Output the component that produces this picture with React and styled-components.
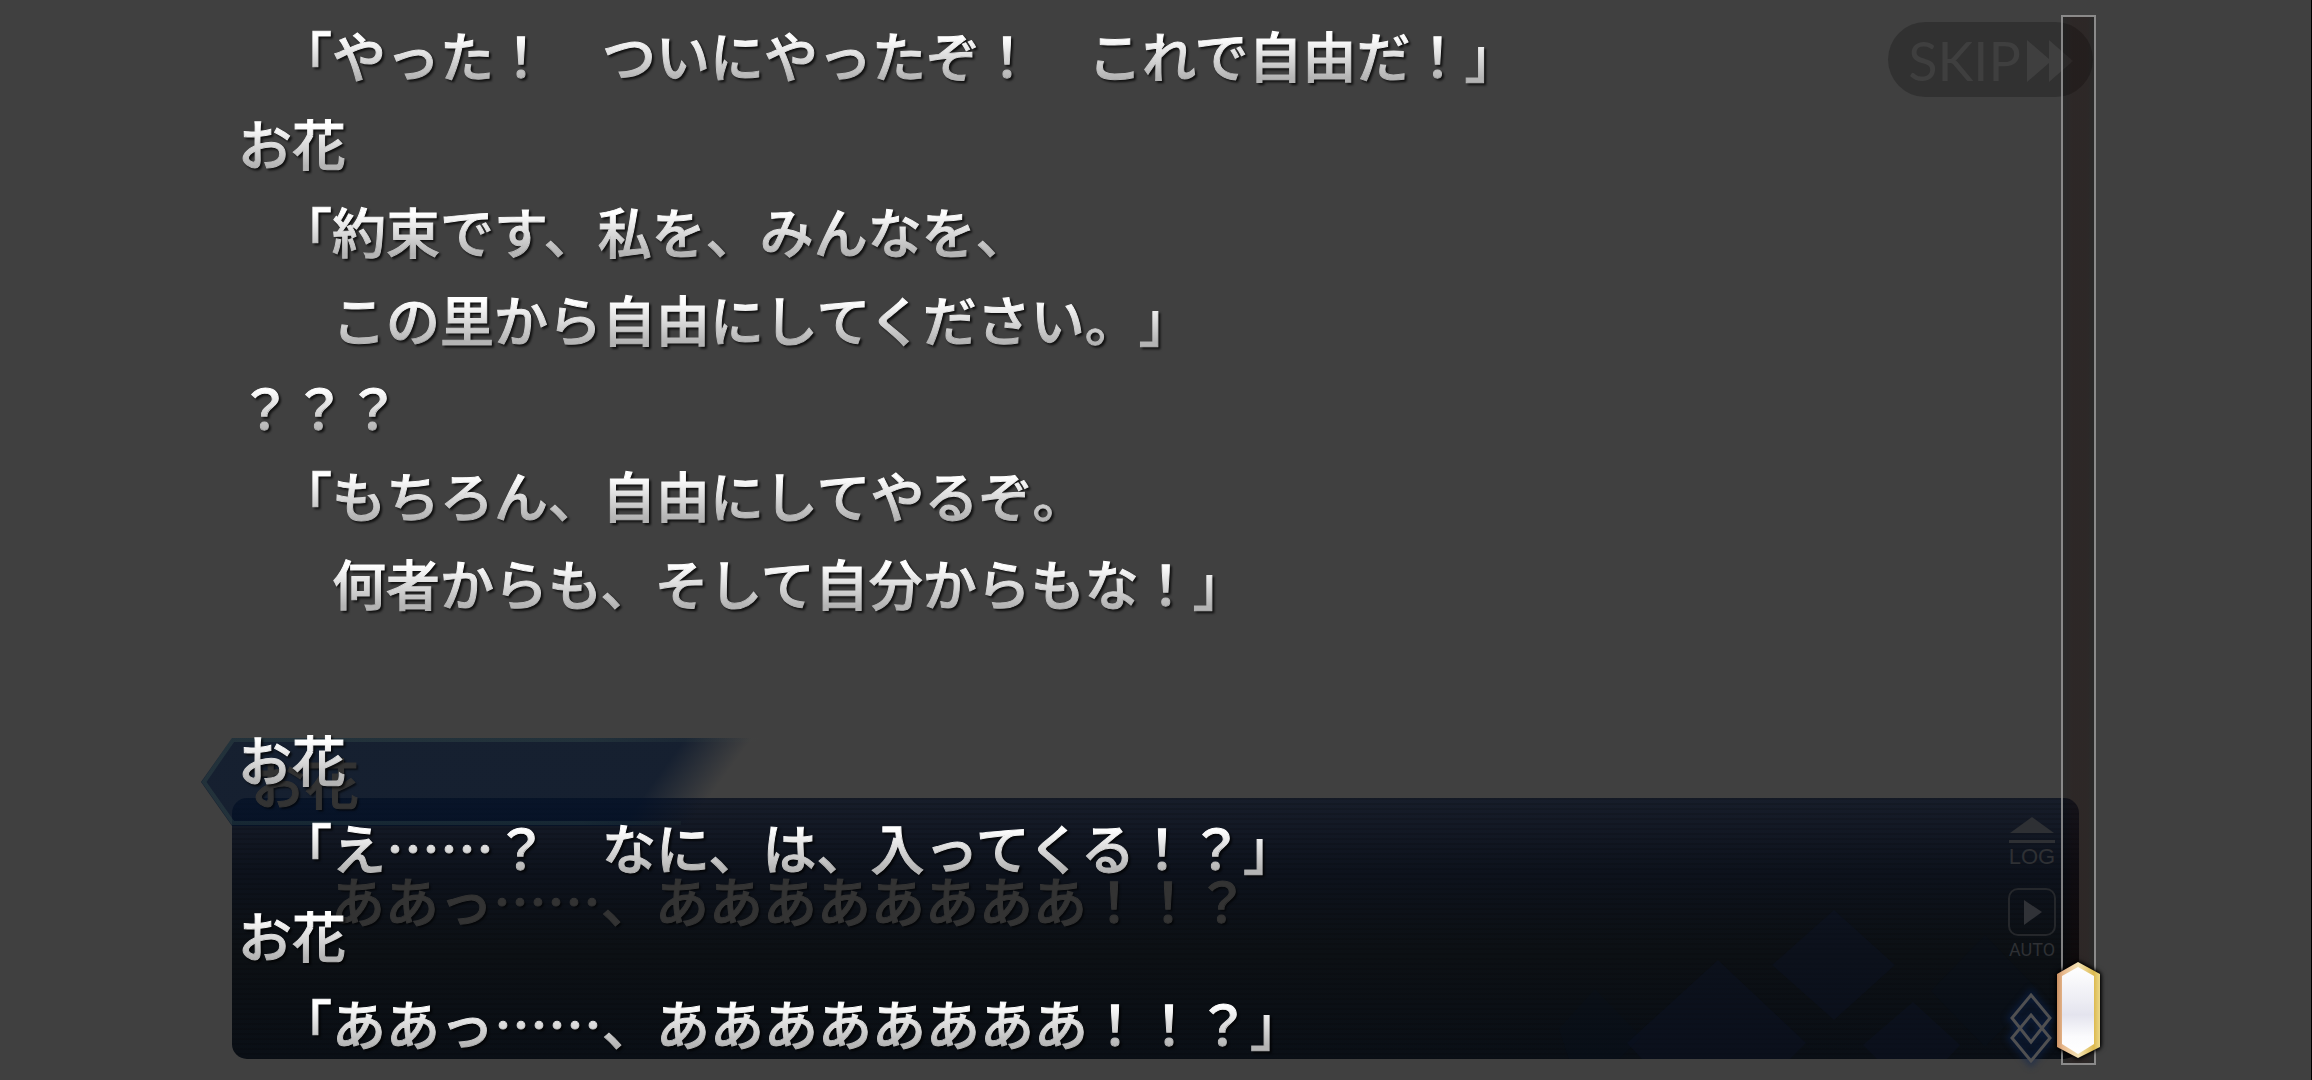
import { useState } from "react";
import styled, { createGlobalStyle } from "styled-components";

const GlobalStyle = createGlobalStyle`
    * {
        box-sizing: border-box;
    }

    body {
        margin: 0;
        background: #404040;
        font-family: "Noto Sans CJK JP", sans-serif;
        text-spacing-trim: space-all;
    }
`;

const Screen = styled.main`
    position: relative;
    display: flex;
    min-height: 100vh;
    padding: 11px 215px 13px 238px;
    border-right: 1px solid #000;
    overflow: hidden;
`;

/* the dimmed game scene that stays visible under the log */
const Scene = styled.div`
    position: absolute;
    inset: 0;
    z-index: 0;
    display: flex;
    flex-direction: column;
    justify-content: space-between;
    padding: 22px 218px 21px 201px;
`;

const SkipButton = styled.button`
    display: flex;
    align-items: center;
    justify-content: center;
    align-self: flex-end;
    gap: 6px;
    width: 205px;
    height: 75px;
    padding: 2px 0 0;
    border: 0;
    border-radius: 38px;
    background: #313131;
    color: #3f3f3f;
    font: 400 54px/72px Lato, sans-serif;
`;

const Dialog = styled.section`
    display: flex;
    flex-direction: column;
`;

const NameTag = styled.div`
    position: relative;
    z-index: 1;
    height: 88px;
    margin-bottom: -28px;
    padding-left: 50px;

    svg {
        position: absolute;
        top: 0;
        left: 0;
    }
`;

const DialogPanel = styled.div`
    position: relative;
    display: flex;
    justify-content: space-between;
    min-height: 261px;
    margin: 0 14px 0 31px;
    padding: 18px 23px 0 99px;
    border-radius: 15px;
    background:
        repeating-linear-gradient(rgba(0, 0, 0, 0.12) 0 2px, transparent 2px 5px),
        linear-gradient(#171d2a 0, #0d121c 28%, #0c1014 60%, #0a0f16 100%);
`;

const Decor = styled.svg`
    position: absolute;
    right: 0;
    bottom: 0;
`;

const GhostText = styled.p`
    position: relative;
    margin: 0;
    color: #333;
    font-size: 54px;
    font-weight: 500;
    line-height: 88px;
    white-space: pre;
    -webkit-text-stroke: 1px #333;
    text-shadow: 2px 2px 2px rgba(0, 0, 0, 0.6);
`;

const GhostLine = styled(GhostText)`
    padding-top: 40px;
`;

const Menu = styled.nav`
    position: relative;
    display: flex;
    flex-direction: column;
    align-items: center;
    width: 48px;
    margin-bottom: -8px;
`;

const MenuButton = styled.button`
    display: flex;
    flex-direction: column;
    align-items: center;
    gap: 4px;
    margin-bottom: ${({ $after }) => $after}px;
    padding: 0;
    border: 0;
    background: none;
    color: #2e3034;
    font: ${({ $narrow }) =>
        $narrow
            ? `400 18px/20px Roboto, sans-serif`
            : `400 22px/20px "Liberation Sans", sans-serif`};
`;

const Log = styled.div`
    position: relative;
    flex: 1;
    filter: drop-shadow(2px 2px 1px rgba(0, 0, 0, 0.75));
`;

const Line = styled.p`
    min-height: 88px;
    margin: 0;
    padding-left: ${({ $quote }) => ($quote ? "40px" : "0")};
    background: linear-gradient(#fff 30%, #f2f2f2 38%, #b4b4b4 76%);
    background-clip: text;
    color: transparent;
    font-size: 54px;
    font-weight: 500;
    line-height: 88px;
    white-space: pre;
    -webkit-text-stroke: 1px transparent;
`;

const Track = styled.div`
    position: relative;
    width: 35px;
    margin: 4px 0 2px;
    border: 2px solid rgba(176, 176, 176, 0.72);
    background: linear-gradient(
        90deg,
        rgba(0, 0, 0, 0.34),
        rgba(18, 4, 2, 0.4) 30%,
        rgba(18, 4, 2, 0.4) 75%,
        rgba(0, 0, 0, 0.34)
    );
`;

const Range = styled.input`
    position: absolute;
    inset: 0;
    width: 100%;
    height: 100%;
    margin: 0;
    opacity: 0;
    writing-mode: vertical-lr;
`;

const Thumb = styled.svg`
    position: absolute;
    left: -12px;
    filter: drop-shadow(0 0 2px #000) drop-shadow(0 0 2px #000);
    pointer-events: none;
`;

const lines = [
    { text: "「やった！　ついにやったぞ！　これで自由だ！」", quote: true },
    { text: "お花" },
    { text: "「約束です、私を、みんなを、", quote: true },
    { text: "　この里から自由にしてください。」", quote: true },
    { text: "？？？" },
    { text: "「もちろん、自由にしてやるぞ。", quote: true },
    { text: "　何者からも、そして自分からもな！」", quote: true },
    { text: "" },
    { text: "お花" },
    { text: "「え……？　なに、は、入ってくる！？」", quote: true },
    { text: "お花" },
    { text: "「ああっ……、ああああああああ！！？」", quote: true },
];

const SkipIcon = () => (
    <svg width="46" height="42" viewBox="0 0 46 42" fill="currentColor">
        <path d="M0 0 22 19V0L46 21 22 42V23L0 42Z" />
    </svg>
);

const TagShape = () => (
    <svg width="570" height="88" viewBox="0 0 570 88">
        <defs>
            <linearGradient
                id="tagFill"
                gradientUnits="userSpaceOnUse"
                x1="480"
                y1="6"
                x2="524"
                y2="38"
            >
                <stop offset="0" stopColor="#011028" stopOpacity="0.67" />
                <stop offset="1" stopColor="#011028" stopOpacity="0" />
            </linearGradient>
            <linearGradient
                id="tagEdge"
                gradientUnits="userSpaceOnUse"
                x1="380"
                y1="0"
                x2="560"
                y2="0"
            >
                <stop offset="0" stopColor="#4a6a5c" stopOpacity="0.24" />
                <stop offset="1" stopColor="#4a6a5c" stopOpacity="0" />
            </linearGradient>
        </defs>
        <path d="M0 44 31 0H570V88H31Z" fill="url(#tagFill)" />
        <path
            d="M560 2H32L3 44 32 85H480"
            fill="none"
            stroke="url(#tagEdge)"
            strokeWidth="4"
        />
    </svg>
);

const LogIcon = () => (
    <svg width="46" height="27" viewBox="0 0 46 27" fill="currentColor">
        <path d="M23 1 45 17H1Z" />
        <path d="M0 24h46v3H0z" />
    </svg>
);

const AutoIcon = () => (
    <svg width="48" height="48" viewBox="0 0 48 48">
        <rect
            x="1"
            y="1"
            width="46"
            height="46"
            rx="9"
            fill="none"
            stroke="#25272b"
            strokeWidth="2"
        />
        <path d="M16 12 34 24 16 37Z" fill="#303237" />
    </svg>
);

const NextIcon = () => (
    <svg width="48" height="76" viewBox="0 0 48 76" overflow="visible">
        <g
            fill="none"
            stroke="#0b2452"
            strokeOpacity="0.5"
            strokeWidth="9"
            style={{ filter: "blur(3px)" }}
        >
            <path d="M23 5 42 28 23 52 4 28Z" />
            <path d="M23 25 42 48 23 71 4 48Z" />
        </g>
        <g fill="none" stroke="#505051" strokeWidth="3">
            <path d="M23 5 42 28 23 52 4 28Z" />
            <path d="M23 25 42 48 23 71 4 48Z" />
        </g>
    </svg>
);

const ThumbShape = ({ style }) => (
    <Thumb style={style} width="55" height="108" viewBox="0 0 55 108">
        <defs>
            <linearGradient id="gold" x1="0" x2="1">
                <stop offset="0" stopColor="#c98f62" />
                <stop offset="0.14" stopColor="#e8b98e" />
                <stop offset="0.5" stopColor="#f4e3b4" />
                <stop offset="0.86" stopColor="#dcb94f" />
                <stop offset="1" stopColor="#ecd98a" />
            </linearGradient>
            <linearGradient id="pearl" x1="0" y1="0" x2="0" y2="1">
                <stop offset="0" stopColor="#ffffff" />
                <stop offset="0.4" stopColor="#ececf3" />
                <stop offset="0.55" stopColor="#e4e4ee" />
                <stop offset="0.8" stopColor="#fbfbfd" />
                <stop offset="1" stopColor="#ffffff" />
            </linearGradient>
        </defs>
        <path d="M27 6 49 18V91L27 102 6 91V18Z" fill="url(#gold)" />
        <path d="M27 11 43 20V88L27 98 11 88V20Z" fill="url(#pearl)" />
    </Thumb>
);

const ScrollBar = () => {
    const [value, setValue] = useState(100);

    return (
        <Track>
            <ThumbShape
                style={{ top: `calc((100% - 107px) * ${value / 100})` }}
            />
            <Range
                type="range"
                min="0"
                max="100"
                value={value}
                aria-label="ログ"
                onChange={(e) => setValue(Number(e.target.value))}
            />
        </Track>
    );
};

const App = () => {
    const linesRendered = lines.map((line, idx) => (
        <Line key={idx} $quote={line.quote}>
            {line.text}
        </Line>
    ));

    return (
        <Screen>
            <GlobalStyle />
            <Scene>
                <SkipButton type="button">
                    SKIP
                    <SkipIcon />
                </SkipButton>
                <Dialog>
                    <NameTag>
                        <TagShape />
                        <GhostText>お花</GhostText>
                    </NameTag>
                    <DialogPanel>
                        <Decor width="520" height="190" viewBox="0 0 520 190">
                            <g fill="#0e1730" fillOpacity="0.28">
                                <path d="M159 91 247 174 231 190H83L68 174Z" />
                                <path d="M275 41 336 96 275 151 213 96Z" />
                                <path d="M354 133 401 176 388 190H318L304 176Z" />
                            </g>
                            <g fill="#0a1428" fillOpacity="0.15">
                                <path d="M36 120 82 168 60 190H10L0 160Z" />
                                <path d="M426 66 480 122 426 178 372 122Z" />
                            </g>
                        </Decor>
                        <GhostLine>ああっ……、ああああああああ！！？</GhostLine>
                        <Menu>
                            <MenuButton type="button" $after={21}>
                                <LogIcon />
                                LOG
                            </MenuButton>
                            <MenuButton type="button" $narrow $after={30}>
                                <AutoIcon />
                                AUTO
                            </MenuButton>
                            <NextIcon />
                        </Menu>
                    </DialogPanel>
                </Dialog>
            </Scene>
            <Log>{linesRendered}</Log>
            <ScrollBar />
        </Screen>
    );
};

export default App;
